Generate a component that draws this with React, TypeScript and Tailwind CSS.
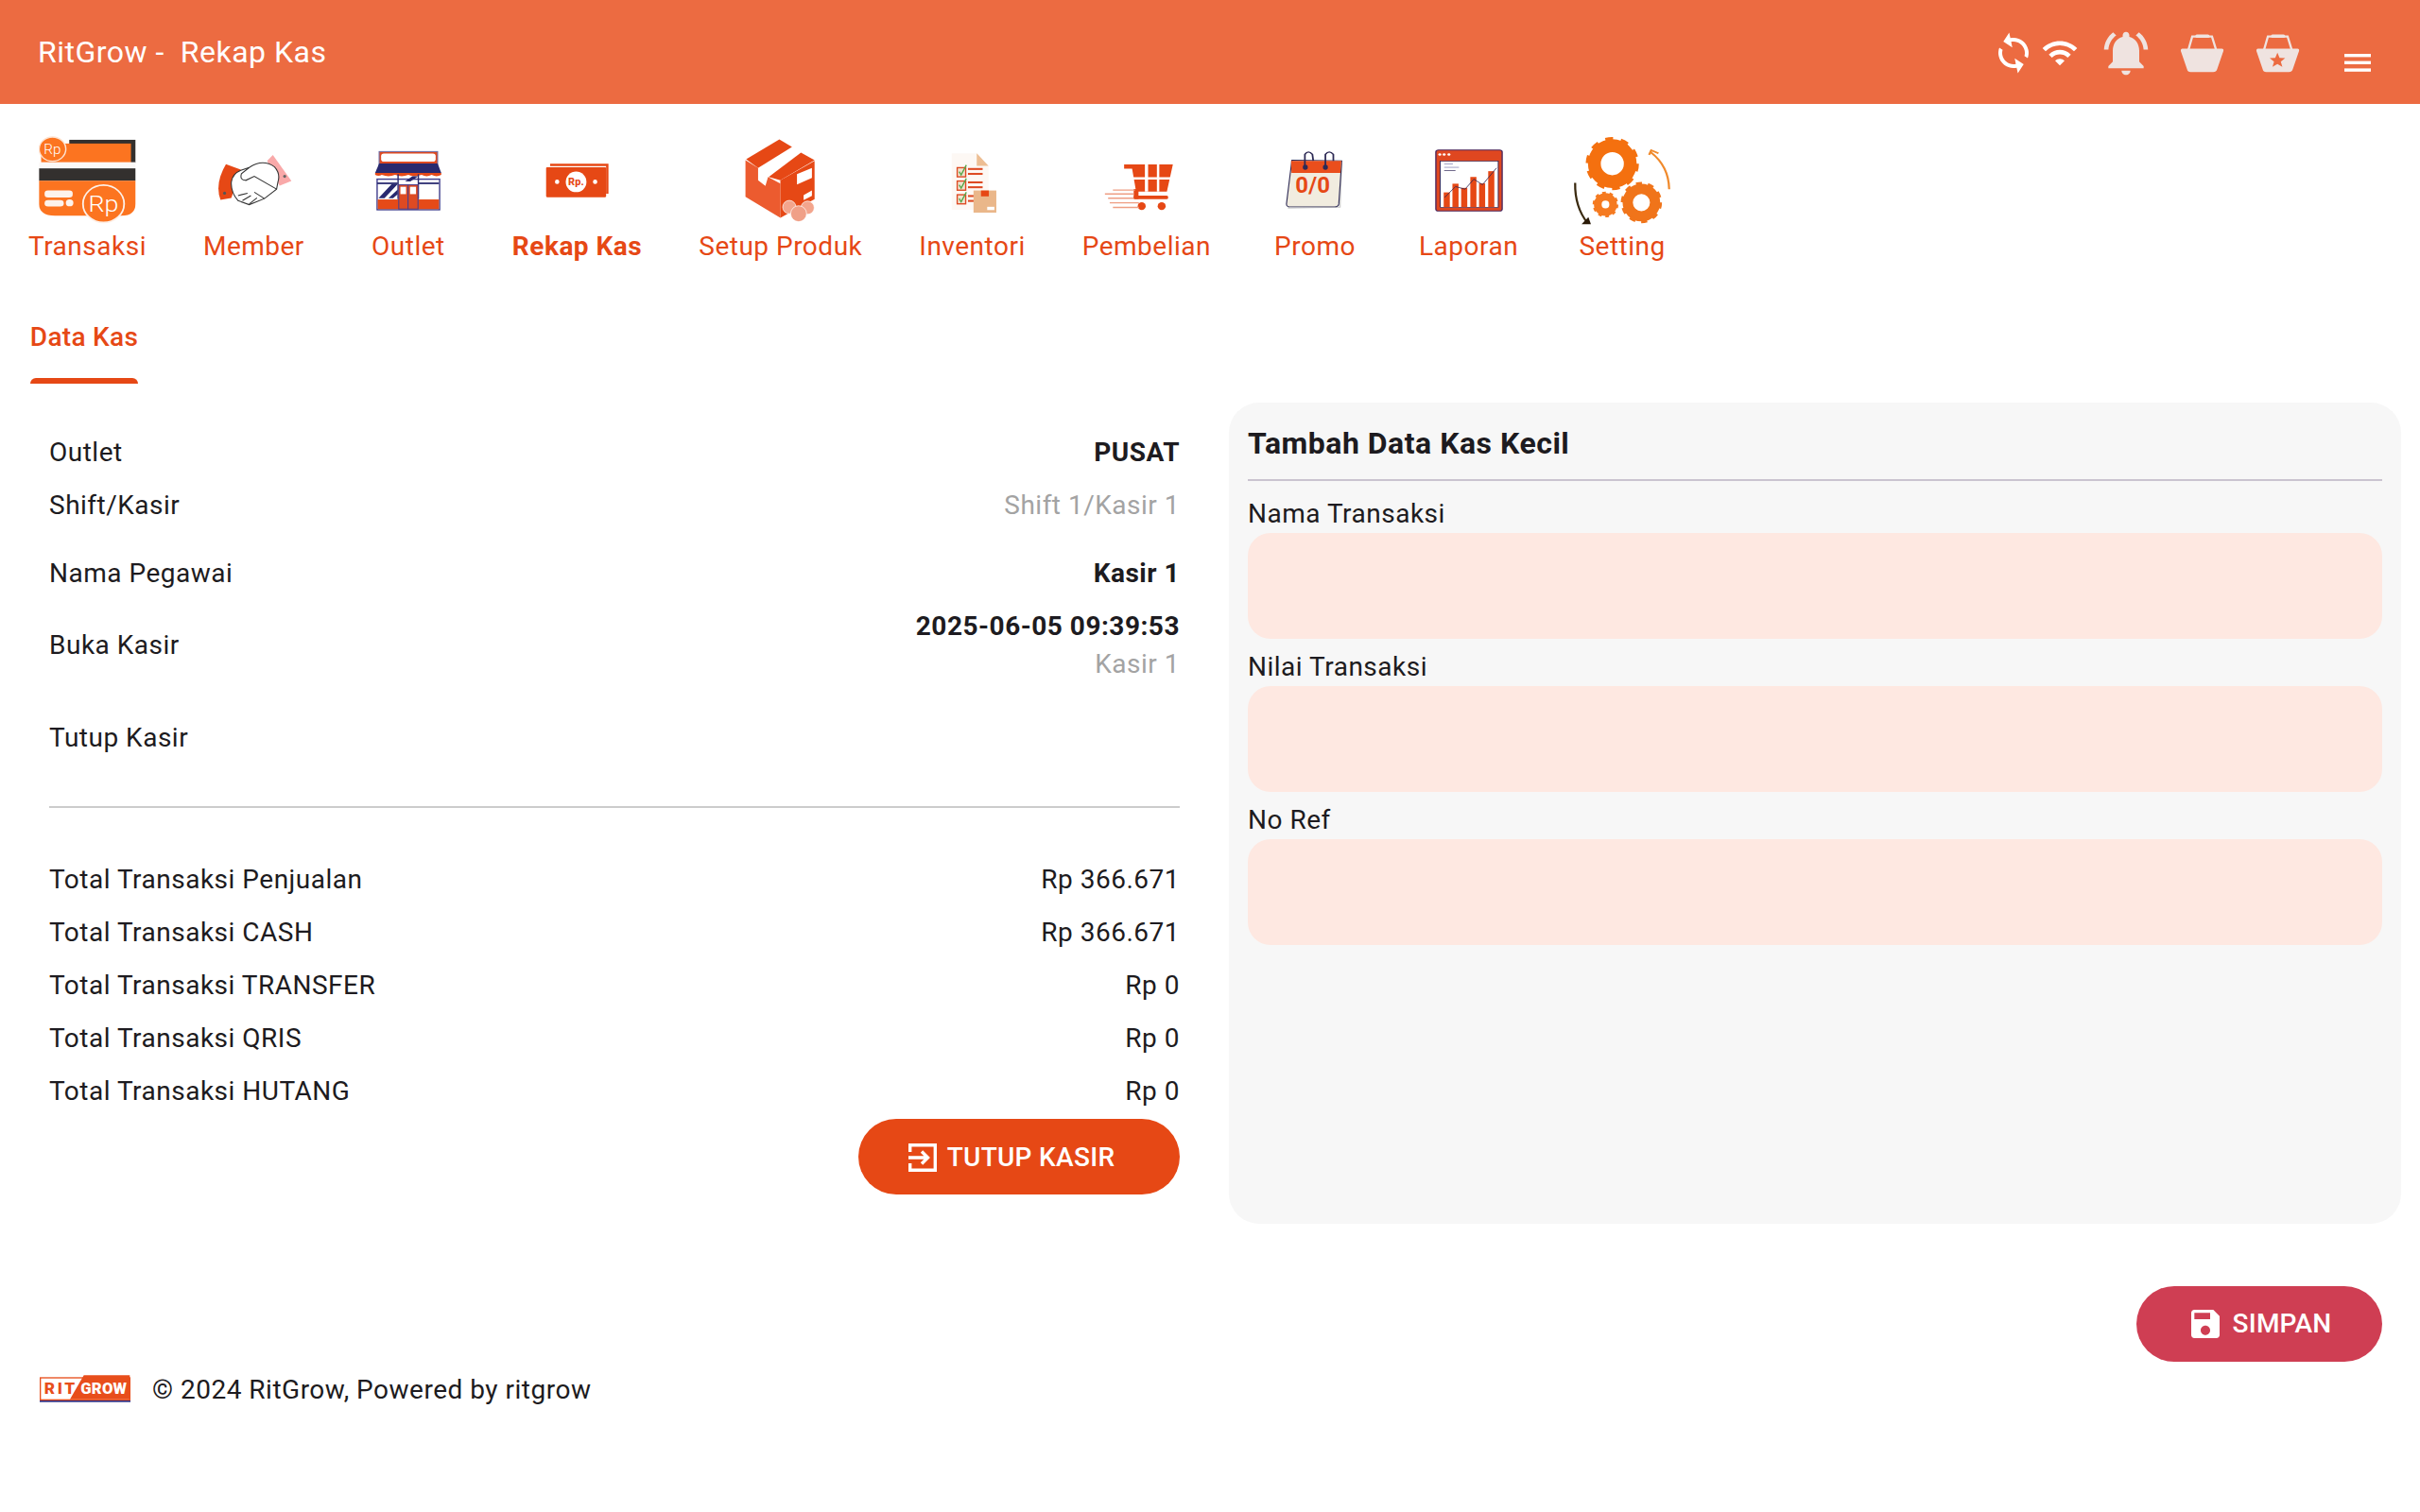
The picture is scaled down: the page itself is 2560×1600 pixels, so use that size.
import React from "react";

const OR = "#E64815";
const HEAD = "#EC6B41";

function Basket({ star }: { star?: boolean }) {
  return (
    <svg width={47} height={42} viewBox="738 93 144 126">
      <path d="M766 145 L778 103 H842 L855 145" fill="none" stroke="#EFE3E0" strokeWidth="7" />
      <rect x="788" y="96" width="46" height="11" rx="5" fill="#EFE3E0" />
      <path d="M746 142 H874 Q881 142 879 150 L859 208 Q856 218 846 218 H773 Q763 218 761 208 L741 150 Q740 142 746 142 Z" fill="#EFE3E0" />
      {star && <path d="M809 155 L816 172 L834 173 L820 184 L825 201 L809 192 L793 201 L798 184 L784 173 L802 172 Z" fill={HEAD} />}
    </svg>
  );
}

function Gear({ cx, cy, r, w, c }: { cx: number; cy: number; r: number; w: number; c: string }) {
  const outer = r + w / 2;
  const circ = 2 * Math.PI * outer;
  const d = circ / 20;
  return (
    <g transform={`translate(${cx} ${cy}) scale(1 1.32)`}>
      <circle r={r} fill="none" stroke={c} strokeWidth={w} />
      <circle r={outer} fill="none" stroke={c} strokeWidth={w * 0.35} strokeDasharray={`${d} ${d}`} />
    </g>
  );
}

const icons: Record<string, React.ReactNode> = {
  Transaksi: (
    <svg width={103} height={94} viewBox="118 66 284 286" preserveAspectRatio="none">
      <rect x="207" y="78" width="193" height="74" fill="#33302E" />
      <rect x="125" y="90" width="262" height="62" fill="#FC7420" />
      <rect x="119" y="150" width="281" height="20" fill="#FBF8F6" />
      <rect x="119" y="170" width="281" height="40" fill="#33302E" />
      <path d="M119 210 H400 V285 Q400 322 360 322 H165 Q119 322 119 285 Z" fill="#FC7420" />
      <circle cx="158" cy="108" r="39" fill="#FC7420" stroke="#FDE3D2" strokeWidth="4" />
      <text x="158" y="123" fontSize="42" fill="#fff" textAnchor="middle" fontFamily="Roboto" fontWeight="300">Rp</text>
      <rect x="135" y="241" width="82" height="23" rx="10" fill="#FDF3EC" />
      <rect x="135" y="272" width="56" height="21" rx="10" fill="#FDF3EC" />
      <circle cx="208" cy="281" r="11" fill="#FDF3EC" />
      <circle cx="307" cy="284" r="60" fill="#FC7420" stroke="#FDF0E8" strokeWidth="5" />
      <text x="307" y="310" fontSize="74" fill="#fff" textAnchor="middle" fontFamily="Roboto" fontWeight="300">Rp</text>
    </svg>
  ),
  Member: (
    <svg width={80} height={55} viewBox="648 132 224 154" className="ml-[2px]">
      <path d="M676 162 L720 178 L692 262 L660 268 Q642 220 676 162 Z" fill={OR} />
      <path d="M815 135 L870 212 L835 226 L798 152 Z" fill="#F9A9A9" />
      <path d="M692 215 Q695 190 720 180 L745 172 Q785 145 820 170 Q838 190 830 215 L826 236 L790 264 L745 282 L712 270 Q690 245 692 215 Z" fill="#fff" stroke="#333" strokeWidth="3" />
      <path d="M745 172 L722 190 Q716 210 735 210 L760 198 L826 236 M712 255 L740 248 M725 270 L750 255 M745 280 L768 262 M790 264 L760 245" fill="none" stroke="#333" strokeWidth="3" />
      <circle cx="672" cy="248" r="4.5" fill="#555" />
      <circle cx="850" cy="198" r="4.5" fill="#666" />
    </svg>
  ),
  Outlet: (
    <svg width={72} height={64} viewBox="1108 118 204 182">
      <rect x="1116" y="205" width="188" height="92" fill="#fff" stroke="#3F3D8C" strokeWidth="4" />
      <rect x="1122" y="122" width="176" height="60" fill="#DE4A22" stroke="#6F6FA8" strokeWidth="3" />
      <rect x="1128" y="128" width="164" height="24" rx="8" fill="#fff" />
      <path d="M1122 158 H1298 L1309 186 H1110 Z" fill="#28296F" />
      <path d="M1110 186 H1309 V192 Q1295 200 1280 192 Q1265 200 1250 192 Q1225 200 1210 192 Q1190 200 1170 192 Q1150 200 1130 192 Q1120 198 1110 192 Z" fill="#E54A18" />
      <path d="M1120 262 L1160 220 H1178 L1138 262 Z M1150 262 L1178 236 V250 L1164 262 Z M1200 212 L1222 196 H1240 L1216 212 Z" fill="#28296F" />
      <rect x="1116" y="215" width="62" height="5" fill="#28296F" />
      <rect x="1240" y="215" width="62" height="5" fill="#28296F" />
      <rect x="1177" y="190" width="4" height="75" fill="#28296F" />
      <rect x="1238" y="190" width="4" height="75" fill="#28296F" />
      <rect x="1118" y="266" width="184" height="29" fill="#E54A18" />
      <rect x="1181" y="222" width="28" height="73" fill="#DE4A22" stroke="#4C3F8C" strokeWidth="3" />
      <rect x="1209" y="222" width="30" height="73" fill="#DE4A22" stroke="#4C3F8C" strokeWidth="3" />
      <rect x="1186" y="228" width="17" height="22" fill="#fff" />
      <rect x="1215" y="228" width="18" height="22" fill="#fff" />
    </svg>
  ),
  "Rekap Kas": (
    <svg width={67} height={38} viewBox="46 158 190 104">
      <path d="M60 160 H235 V250 H228 V167 H60 Z" fill={OR} />
      <rect x="48" y="170" width="180" height="90" rx="3" fill={OR} />
      <circle cx="138" cy="214" r="31" fill="#fff" />
      <circle cx="81" cy="214" r="6.5" fill="#fff" />
      <circle cx="195" cy="214" r="6.5" fill="#fff" />
      <text x="138" y="225" fontSize="31" fontWeight="800" fill={OR} textAnchor="middle" fontFamily="Roboto">Rp.</text>
    </svg>
  ),
  "Setup Produk": (
    <svg width={77} height={90} viewBox="638 88 214 256">
      <path d="M640 155 L678 178 V215 L700 232 L708 205 L745 225 V328 L640 265 Z" fill="#EC5B2F" />
      <path d="M745 215 L848 157 V272 L745 328 Z" fill={OR} />
      <path d="M642 152 L742 92 L780 115 L678 178 Z" fill={OR} />
      <path d="M710 205 L807 132 L848 155 L745 215 Z" fill={OR} />
      <path d="M795 197 L840 178 V208 L795 228 Z M815 260 L840 246 V262 L815 275 Z" fill="#fff" />
      <circle cx="772" cy="296" r="20" fill="#F3A58D" stroke="#fff" strokeWidth="2" />
      <circle cx="827" cy="298" r="20" fill="#F3A58D" stroke="#fff" strokeWidth="2" />
      <circle cx="800" cy="316" r="24" fill="#F0A088" stroke="#fff" strokeWidth="2" />
    </svg>
  ),
  Inventori: (
    <svg width={50} height={66} viewBox="1250 130 145 188" className="mt-[6px] ml-[4px]">
      <path d="M1255 132 H1332 L1368 170 V305 H1255 Z" fill="#FDF8F4" />
      <path d="M1332 132 L1368 170 H1332 Z" fill="#EDBE93" />
      {[176, 217, 259].map((y) => (
        <g key={y}>
          <rect x="1272" y={y} width="26" height="28" fill="#F0E4D0" stroke="#DE4A22" strokeWidth="4" />
          <path d={`M${1278} ${y + 12} L${1284} ${y + 22} L${1300} ${y - 8}`} fill="none" stroke="#58A74A" strokeWidth="4" />
          <rect x="1305" y={y + 1} width="45" height="6" fill="#DE4A22" />
          <rect x="1305" y={y + 16} width="45" height="6" fill="#DE4A22" />
        </g>
      ))}
      <rect x="1322" y="246" width="70" height="68" fill="#EAB78A" />
      <rect x="1345" y="246" width="24" height="18" fill={OR} />
      <rect x="1364" y="296" width="22" height="10" fill="#fff" />
    </svg>
  ),
  Pembelian: (
    <svg width={74} height={50} viewBox="98 162 175 144" preserveAspectRatio="none" className="mt-[14px] mr-[16px]">
      <path d="M148 165 H270 L255 248 H178 L168 178 H148 Z" fill={OR} />
      <path d="M200 165 H208 V248 H200 Z M230 165 H236 V248 H230 Z M165 204 H265 V211 H165 Z" fill="#fff" />
      <rect x="172" y="260" width="86" height="11" rx="4" fill={OR} />
      <rect x="172" y="240" width="12" height="30" fill={OR} />
      <ellipse cx="192" cy="292" rx="10" ry="12" fill={OR} />
      <ellipse cx="242" cy="292" rx="10" ry="12" fill={OR} />
      <path d="M120 243 H175 M100 255 H172 M108 268 H172 M112 282 H185 M120 296 H185" stroke="#EE9E83" strokeWidth="4" />
    </svg>
  ),
  Promo: (
    <svg width={62} height={65} viewBox="538 114 140 192" preserveAspectRatio="none">
      <path d="M553 170 L672 160 L668 295 L545 298 Z" fill="#EEE" stroke="#ccc" strokeWidth="3" />
      <path d="M553 148 L540 285 Q540 294 550 294 L655 294 Q664 294 665 285 L672 150 Z" fill="#F1ECDF" stroke="#2D2A55" strokeWidth="2.5" />
      <path d="M551 150 H671 L669 188 H552 Z" fill="#EA4E1C" />
      <path d="M584 172 V130 Q592 115 602 130 L604 150 M633 172 V130 Q642 115 652 130 L652 150" fill="none" stroke="#2D2A55" strokeWidth="4" />
      <ellipse cx="585" cy="170" rx="6" ry="8" fill="#2D2A55" />
      <ellipse cx="633" cy="170" rx="6" ry="8" fill="#2D2A55" />
      <text transform="translate(603 250) scale(1 1.3)" fontSize="54" fontWeight="700" fill={OR} textAnchor="middle" fontFamily="Roboto">0/0</text>
    </svg>
  ),
  Laporan: (
    <svg width={72} height={66} viewBox="893 112 156 194" preserveAspectRatio="none">
      <rect x="895" y="114" width="152" height="190" rx="6" fill="#DF4720" stroke="#4C2A60" strokeWidth="3" />
      <rect x="905" y="149" width="133" height="144" fill="#fff" stroke="#2D2455" strokeWidth="2" />
      <circle cx="904" cy="128" r="3.5" fill="#fff" />
      <circle cx="914" cy="128" r="3.5" fill="#fff" />
      <circle cx="925" cy="128" r="3.5" fill="#fff" />
      <rect x="913" y="246" width="14" height="46" fill={OR} />
      <rect x="933" y="219" width="14" height="73" fill={OR} />
      <rect x="953" y="232" width="14" height="60" fill={OR} />
      <rect x="974" y="198" width="14" height="94" fill={OR} />
      <rect x="994" y="218" width="14" height="74" fill={OR} />
      <rect x="1015" y="180" width="14" height="112" fill={OR} />
      <path d="M915 262 L940 228 L962 236 L982 205 L1002 222 L1034 170" fill="none" stroke="#2D2455" strokeWidth="2" />
      <rect x="914" y="157" width="20" height="2" fill="#77a" />
      <rect x="914" y="167" width="34" height="2" fill="#77a" />
      <rect x="914" y="177" width="26" height="2" fill="#2D2455" />
    </svg>
  ),
  Setting: (
    <svg width={104} height={94} viewBox="1220 72 230 274" className="-mx-[2px]" preserveAspectRatio="none">
      <Gear cx={1312} cy={157} r={42} w={30} c="#F4700F" />
      <Gear cx={1296} cy={283} r={18} w={18} c="#F57A20" />
      <Gear cx={1380} cy={277} r={32} w={24} c="#F0741A" />
      <path d="M1445 236 Q1444 165 1402 122 M1398 130 L1403 116 L1420 125" fill="none" stroke="#F08A2C" strokeWidth="5" />
      <path d="M1225 216 Q1224 290 1254 340" fill="none" stroke="#3A2A10" strokeWidth="5" />
      <path d="M1240 344 H1262 L1256 322 Z" fill="#2A1A08" />
    </svg>
  ),
};

const menus = ["Transaksi", "Member", "Outlet", "Rekap Kas", "Setup Produk", "Inventori", "Pembelian", "Promo", "Laporan", "Setting"];

const totals = [
  ["Total Transaksi Penjualan", "Rp 366.671"],
  ["Total Transaksi CASH", "Rp 366.671"],
  ["Total Transaksi TRANSFER", "Rp 0"],
  ["Total Transaksi QRIS", "Rp 0"],
  ["Total Transaksi HUTANG", "Rp 0"],
];

function Field({ label }: { label: string }) {
  return (
    <div className="flex flex-col">
      <div className="h-[38px] leading-[36px]">{label}</div>
      <div className="h-[112px] rounded-[24px] bg-[#FEE8E1]" />
    </div>
  );
}

export default function App() {
  return (
    <div className="w-[2560px] h-[1600px] bg-white font-[Roboto,sans-serif] text-[#1D1B20] text-[28px] tracking-[0.5px] overflow-hidden">
      <header className="h-[110px] bg-[#EC6B41] flex items-center justify-between pl-[40px] pr-[52px]">
        <div className="text-white text-[32px] tracking-[0.5px] whitespace-pre">RitGrow -  Rekap Kas</div>
        <div className="flex items-center mt-[1px]">
          <svg width={48} height={48} viewBox="0 0 24 24" fill="#fff" className="-rotate-12 ml-[1px]">
            <path d="M12 4V1L8 5l4 4V6c3.31 0 6 2.69 6 6 0 1.01-.25 1.97-.7 2.8l1.46 1.46C19.54 15.03 20 13.57 20 12c0-4.42-3.58-8-8-8zm0 14c-3.31 0-6-2.69-6-6 0-1.01.25-1.97.7-2.8L5.24 7.74C4.46 8.97 4 10.43 4 12c0 4.42 3.58 8 8 8v3l4-4-4-4v3z" />
          </svg>
          <svg width={40} height={40} viewBox="0 0 24 24" fill="#fff" className="ml-[5px]">
            <path d="M1 9l2 2c4.97-4.97 13.03-4.97 18 0l2-2C16.93 2.93 7.08 2.93 1 9zm8 8l3 3 3-3c-1.65-1.66-4.34-1.66-6 0zm-4-4l2 2c2.76-2.76 7.24-2.76 10 0l2-2C15.14 9.14 8.87 9.14 5 13z" />
          </svg>
          <svg width={56} height={56} viewBox="0 0 24 24" fill="#EFE3E0" className="ml-[22px]">
            <path d="M7.58 4.08L6.15 2.65C3.75 4.48 2.17 7.3 2.03 10.5h2c.15-2.65 1.51-4.97 3.55-6.42zm12.39 6.42h2c-.15-3.2-1.73-6.02-4.12-7.85l-1.42 1.43c2.02 1.45 3.39 3.77 3.54 6.42zM18 11c0-3.07-1.64-5.64-4.5-6.32V4c0-.83-.67-1.5-1.5-1.5s-1.5.67-1.5 1.5v.68C7.63 5.36 6 7.92 6 11v5l-2 2v1h16v-1l-2-2v-5zm-6 11c.14 0 .27-.01.4-.04.65-.14 1.18-.58 1.44-1.18.1-.24.15-.5.15-.78h-4c.01 1.1.9 2 2.01 2z" />
          </svg>
          <div className="ml-[29px] flex"><Basket /></div>
          <div className="ml-[33px] flex"><Basket star /></div>
          <svg width={28} height={19} viewBox="0 0 28 19" fill="#fff" className="ml-[47px] mt-[22px]">
            <rect width="28" height="3.4" />
            <rect y="7.6" width="28" height="3.4" />
            <rect y="15.4" width="28" height="3.4" />
          </svg>
        </div>
      </header>

      <nav className="flex gap-[60px] pl-[30px] pt-[30px] text-[#E64815]">
        {menus.map((m) => (
          <div key={m} className="flex flex-col items-center min-w-[100px]">
            <div className="h-[101px] flex items-center justify-center">{icons[m]}</div>
            <div className={`h-[40px] leading-[40px] whitespace-nowrap ${m === "Rekap Kas" ? "font-bold" : ""}`}>{m}</div>
          </div>
        ))}
      </nav>

      <div className="ml-[32px] mt-[56px] w-[114px] flex flex-col items-center">
        <div className="h-[40px] leading-[40px] font-medium tracking-[0.3px] text-[#E64815] whitespace-nowrap">Data Kas</div>
        <div className="mt-[23px] h-[6px] w-full rounded-t-[6px] bg-[#E64815]" />
      </div>

      <main className="flex gap-[52px] pl-[52px] pt-[20px]">
        <section className="w-[1196px] pt-[25px]">
          <div className="h-[56px] flex items-center justify-between"><span>Outlet</span><span className="font-bold">PUSAT</span></div>
          <div className="h-[56px] flex items-center justify-between"><span>Shift/Kasir</span><span className="text-[#A3A3A3]">Shift 1/Kasir 1</span></div>
          <div className="h-[56px] mt-[16px] flex items-center justify-between"><span>Nama Pegawai</span><span className="font-bold">Kasir 1</span></div>
          <div className="h-[80px] mt-[8px] flex items-center justify-between">
            <span>Buka Kasir</span>
            <div className="flex flex-col items-end">
              <span className="font-bold leading-[40px]">2025-06-05 09:39:53</span>
              <span className="text-[#A3A3A3] leading-[40px]">Kasir 1</span>
            </div>
          </div>
          <div className="h-[56px] mt-[30px] flex items-center"><span>Tutup Kasir</span></div>
          <div className="h-[2px] mt-[44px] bg-[#CCCCCC]" />
          <div className="mt-[48px]">
            {totals.map(([a, b]) => (
              <div key={a} className="h-[56px] flex items-center justify-between"><span>{a}</span><span>{b}</span></div>
            ))}
          </div>
          <div className="flex justify-end mt-[1px]">
            <button className="h-[80px] w-[340px] rounded-full bg-[#E64815] text-white font-medium flex items-center justify-center gap-[11px] tracking-[0.3px] pr-[16px] pt-[1px]">
              <svg width={30} height={30} viewBox="0 0 30 30" fill="none" stroke="#fff" strokeWidth="3.4">
                <path d="M1.7 9 V1.7 H28.3 V28.3 H1.7 V21" />
                <path d="M0 15 H20 M14 8.5 L20.5 15 L14 21.5" />
              </svg>
              TUTUP KASIR
            </button>
          </div>
        </section>

        <section className="w-[1240px] h-[869px] rounded-[32px] bg-[#F7F7F7] px-[20px]">
          <div className="h-[83px] border-b-2 border-[#CAC4D0] pt-[21px] text-[32px] leading-[44px] font-bold tracking-[0.5px]">Tambah Data Kas Kecil</div>
          <div className="flex flex-col gap-[12px] pt-[17px]">
            <Field label="Nama Transaksi" />
            <Field label="Nilai Transaksi" />
            <Field label="No Ref" />
          </div>
        </section>
      </main>

      <div className="flex justify-end pr-[40px] mt-[66px]">
        <button className="h-[80px] w-[260px] rounded-full bg-[#CF3E53] text-white font-medium flex items-center justify-center gap-[14px] tracking-[0.2px] pl-[4px]">
          <svg width={30} height={30} viewBox="3 3 18 18" fill="#fff">
            <path d="M17 3H5c-1.11 0-2 .9-2 2v14c0 1.1.89 2 2 2h14c1.1 0 2-.9 2-2V7l-4-4zm-5 16c-1.66 0-3-1.34-3-3s1.34-3 3-3 3 1.34 3 3-1.34 3-3 3zm3-10H5V5h10v4z" />
          </svg>
          SIMPAN
        </button>
      </div>

      <footer className="flex items-center pl-[42px] mt-[14px] h-[30px]">
        <svg width={96} height={30} viewBox="0 0 288 88">
          <rect x="2" y="8" width="284" height="70" fill="#fff" stroke="#E84E1B" strokeWidth="4" />
          <path d="M140 0 H286 V76 H96 Z" fill="#E84E1B" />
          <rect x="0" y="80" width="288" height="5" fill="#2D2E83" />
          <text x="14" y="60" fontSize="52" fontWeight="900" fill="#E84E1B" letterSpacing="8" fontFamily="Roboto">RIT</text>
          <text x="130" y="60" fontSize="50" fontWeight="900" fill="#fff" fontFamily="Roboto">GROW</text>
        </svg>
        <span className="ml-[23px] mt-[1px]">© 2024 RitGrow, Powered by ritgrow</span>
      </footer>
    </div>
  );
}
